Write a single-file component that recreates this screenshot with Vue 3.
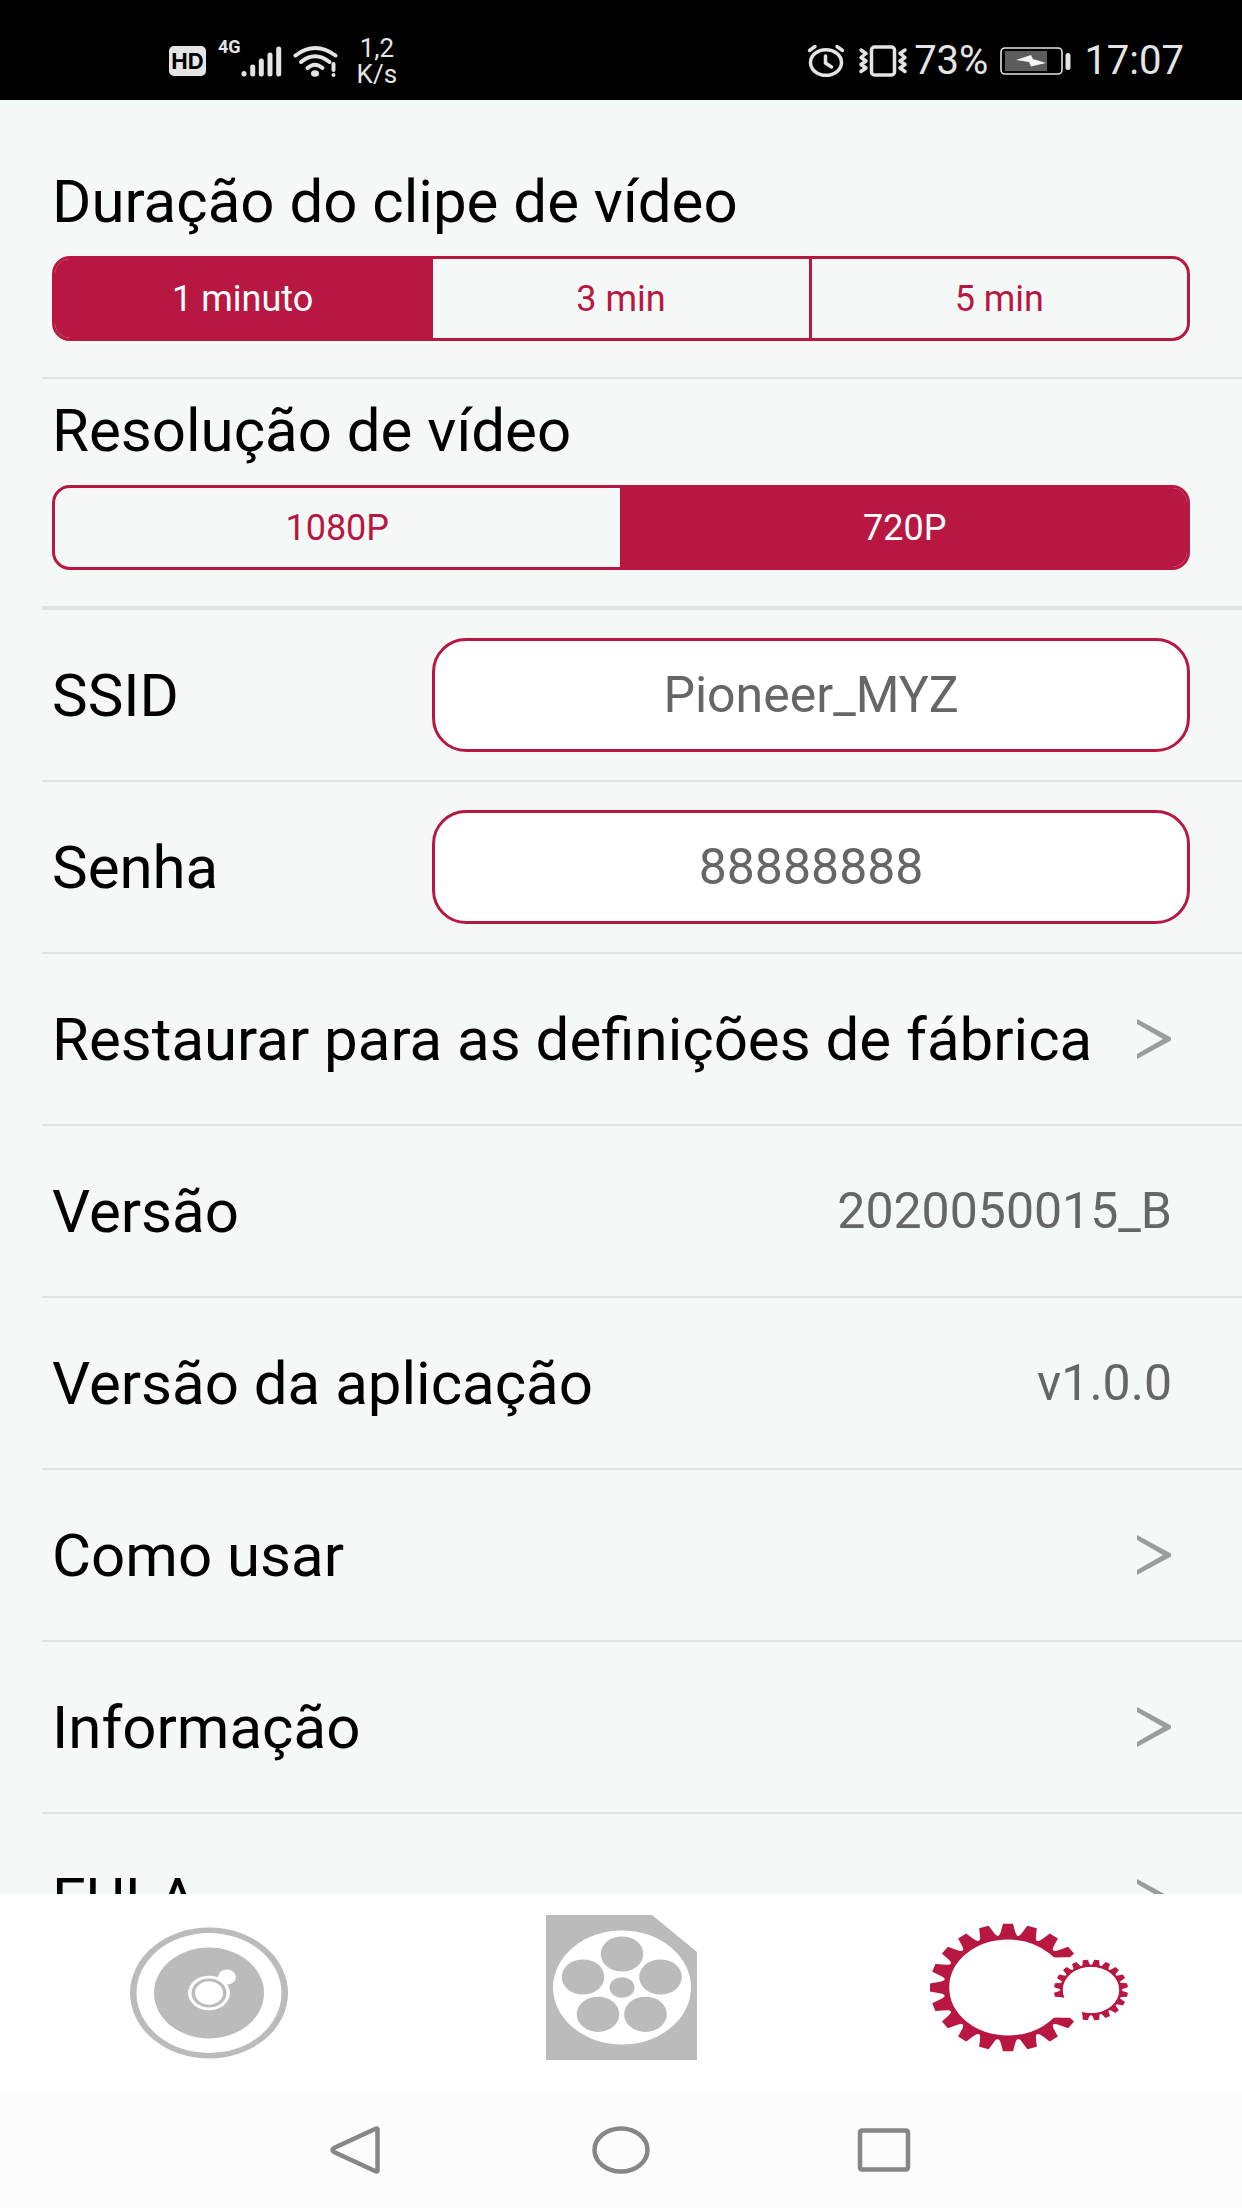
<script setup>
import { ref } from 'vue'

const durations = ['1 minuto', '3 min', '5 min']
const resolutions = ['1080P', '720P']
const duration = ref('1 minuto')
const resolution = ref('720P')
const ssid = ref('Pioneer_MYZ')
const password = ref('88888888')

const rows = [
  { label: 'Restaurar para as definições de fábrica', link: true },
  { label: 'Versão', value: '2020050015_B' },
  { label: 'Versão da aplicação', value: 'v1.0.0' },
  { label: 'Como usar', link: true },
  { label: 'Informação', link: true },
  { label: 'EULA', link: true }
]

const range = (from, to, step) => {
  const out = []
  for (let a = from; a <= to; a += step) out.push(a)
  return out
}
// Angles run clockwise from the right-hand side.
const bigTeeth = range(36, 324, 18)
const smallTeeth = [99].concat(range(171, 441, 18))
</script>

<template>
  <div class="screen">
    <header class="status">
      <div class="status-group">
        <span class="hd">HD</span>
        <span class="net">4G</span>
        <svg class="bars" width="42" height="34" viewBox="0 0 42 34" aria-hidden="true">
          <g stroke="#e4e4e4" stroke-width="5" stroke-linecap="round">
            <path d="M3 29.500V30M11.700 23V30M20.300 17V30M29 11V30M37.700 5V30" />
          </g>
        </svg>
        <svg class="wifi" width="46" height="34" viewBox="0 0 46 34" aria-hidden="true">
          <g fill="none" stroke="#e4e4e4" stroke-width="4" stroke-linecap="round">
            <path d="M2.500 11.500Q22 -3.500 42.500 11.500" />
            <path d="M8 18Q22 6.500 36.500 18" />
            <path d="M14.500 24Q22 17.500 29.500 24" />
            <path d="M40.500 20V26M40.500 31V31.100" />
          </g>
          <ellipse cx="22" cy="29.500" rx="4" ry="3.300" fill="#e4e4e4" />
        </svg>
        <span class="speed">1,2<br />K/s</span>
      </div>
      <div class="status-group">
        <svg width="38" height="34" viewBox="0 0 38 34" aria-hidden="true">
          <g fill="none" stroke="#e4e4e4" stroke-width="3.500" stroke-linecap="round">
            <ellipse cx="19" cy="18.500" rx="15.500" ry="12.800" />
            <path d="M18.500 12V19L24.500 23" />
            <path d="M2.500 6.500L8 2.500M35.500 6.500L30 2.500" />
          </g>
        </svg>
        <svg class="vibrate" width="50" height="34" viewBox="0 0 50 34" aria-hidden="true">
          <g fill="none" stroke="#e4e4e4" stroke-width="3.500" stroke-linecap="round" stroke-linejoin="round">
            <rect x="13.500" y="3" width="23" height="28" rx="3" />
            <path d="M3 6L8 9.500L3 13.500L8 17L3 20.500L8 24L3 27.500" />
            <path d="M47 6L42 9.500L47 13.500L42 17L47 20.500L42 24L47 27.500" />
          </g>
        </svg>
        <span class="clock">73%</span>
        <svg class="battery" width="72" height="30" viewBox="0 0 72 30" aria-hidden="true">
          <rect x="1" y="2" width="61" height="26" rx="4" fill="none" stroke="#e4e4e4" stroke-width="1.600" />
          <rect x="5" y="5" width="42" height="20" fill="#5c5c5c" />
          <path d="M16 14L31 9L33 13L46 17L31 20.500L29 16Z" fill="#f4f4f4" />
          <rect x="65.500" y="7" width="5" height="17" rx="2.500" fill="#e4e4e4" />
        </svg>
        <span class="clock">17:07</span>
      </div>
    </header>

    <main class="settings">
      <section class="block first">
        <h2>Duração do clipe de vídeo</h2>
        <div class="segments" role="group" aria-label="Duração do clipe de vídeo">
          <button
            v-for="d in durations"
            :key="d"
            type="button"
            :class="{ on: d === duration }"
            :aria-pressed="d === duration"
            @click="duration = d"
          >{{ d }}</button>
        </div>
      </section>
      <section class="block second">
        <h2>Resolução de vídeo</h2>
        <div class="segments" role="group" aria-label="Resolução de vídeo">
          <button
            v-for="r in resolutions"
            :key="r"
            type="button"
            :class="{ on: r === resolution }"
            :aria-pressed="r === resolution"
            @click="resolution = r"
          >{{ r }}</button>
        </div>
      </section>
      <div class="row field">
        <label for="ssid">SSID</label>
        <input id="ssid" v-model="ssid" type="text" />
      </div>
      <div class="row field">
        <label for="password">Senha</label>
        <input id="password" v-model="password" type="text" />
      </div>
      <component
        :is="row.link ? 'a' : 'div'"
        v-for="row in rows"
        :key="row.label"
        class="row"
        :href="row.link ? '#' : undefined"
      >
        <span>{{ row.label }}</span>
        <svg v-if="row.link" width="36" height="42" viewBox="0 0 36 42" aria-hidden="true">
          <path d="M1 1V6L27 21L1 36V41L35 22.500V19.500Z" fill="#9b9d9c" />
        </svg>
        <span v-else class="value">{{ row.value }}</span>
      </component>
    </main>

    <nav class="tabs">
      <button type="button" aria-label="Câmera">
        <svg width="240" height="160" viewBox="0 0 240 160" aria-hidden="true">
          <g fill="#bbb">
            <ellipse cx="122" cy="80" rx="79" ry="65.500" />
            <ellipse cx="122" cy="80" rx="72.500" ry="60" fill="#fff" />
            <ellipse cx="122" cy="80" rx="55" ry="45.500" />
            <ellipse cx="140" cy="64" rx="9" ry="7.500" fill="#fff" />
            <ellipse cx="122" cy="80" rx="21" ry="17.200" fill="#fff" />
            <ellipse cx="122" cy="80" rx="17.500" ry="14.500" />
            <ellipse cx="122" cy="80" rx="14" ry="11.800" fill="#fff" />
          </g>
        </svg>
      </button>
      <button type="button" aria-label="Vídeos">
        <svg width="240" height="160" viewBox="0 0 240 160" aria-hidden="true">
          <g fill="#bbb">
            <path d="M45 2H151L196 39V147H45Z" />
            <ellipse cx="121" cy="74.500" rx="69" ry="57" fill="#fff" />
            <ellipse cx="121" cy="74.500" rx="12.500" ry="10.300" />
            <ellipse cx="121" cy="41" rx="21.300" ry="17.600" />
            <ellipse cx="82" cy="64" rx="21.300" ry="17.600" />
            <ellipse cx="159.500" cy="64" rx="21.300" ry="17.600" />
            <ellipse cx="97" cy="101.300" rx="21.300" ry="17.600" />
            <ellipse cx="144.500" cy="101.300" rx="21.300" ry="17.600" />
          </g>
        </svg>
      </button>
      <button type="button" aria-label="Configurações" aria-current="page">
        <svg width="240" height="160" viewBox="0 0 240 160" aria-hidden="true">
          <defs>
            <clipPath id="big-gap"><path d="M-90 -90H90V-37H38V37H90V90H-90Z" /></clipPath>
            <clipPath id="small-gap"><path d="M-45 -45H45V45H-9V9H-45Z" /></clipPath>
          </defs>
          <g transform="translate(93 74.500) scale(1 .816)" fill="#b81742">
            <g clip-path="url(#big-gap)">
              <circle r="61.500" fill="none" stroke="#b81742" stroke-width="5.500" />
              <path
                v-for="a in bigTeeth"
                :key="a"
                d="M60 -11Q65 -8 67 -7.500L78 -5V5L67 7.500Q65 8 60 11Z"
                :transform="`rotate(${a})`"
              />
            </g>
          </g>
          <g transform="translate(176 77) scale(1 .82)" fill="#b81742">
            <g clip-path="url(#small-gap)">
              <circle r="29.500" fill="none" stroke="#b81742" stroke-width="2.500" />
              <path
                v-for="a in smallTeeth"
                :key="a"
                d="M28.500 -5L32 -3.500L37 -2.500V2.500L32 3.500L28.500 5Z"
                :transform="`rotate(${a})`"
              />
            </g>
          </g>
        </svg>
      </button>
    </nav>

    <nav class="system">
      <button type="button" aria-label="Voltar">
        <svg width="60" height="50" viewBox="0 0 60 50" aria-hidden="true">
          <path d="M50.500 4V46Q50 47 48 46L7 27Q4 25 7 23L48 4Q50 3 50.500 4Z" />
        </svg>
      </button>
      <button type="button" aria-label="Início">
        <svg width="60" height="50" viewBox="0 0 60 50" aria-hidden="true">
          <ellipse cx="30" cy="25" rx="26.500" ry="21.500" />
        </svg>
      </button>
      <button type="button" aria-label="Recentes">
        <svg width="60" height="50" viewBox="0 0 60 50" aria-hidden="true">
          <rect x="5" y="5.500" width="48" height="39" rx="2" />
        </svg>
      </button>
    </nav>
  </div>
</template>

<style>
body {
  margin: 0;
  background: #f4f8f7;
}
</style>

<style scoped>
.screen {
  display: flex;
  flex-direction: column;
  height: 100vh;
  overflow: hidden;
  background: #f4f8f7;
  color: #000;
  font-family: Roboto, sans-serif;
}
svg {
  display: block;
  flex: none;
}
button {
  margin: 0;
  padding: 0;
  border: 0;
  background: none;
  font: inherit;
}

.status {
  display: flex;
  flex: none;
  align-items: center;
  justify-content: space-between;
  box-sizing: border-box;
  height: 100px;
  padding: 22px 58px 0 169px;
  background: #000;
  color: #e4e4e4;
}
.status-group {
  display: flex;
  align-items: center;
}
.hd {
  width: 37px;
  border-radius: 5px;
  background: #e4e4e4;
  color: #000;
  font-family: Inter, sans-serif;
  font-size: 22px;
  font-weight: 700;
  line-height: 30px;
  text-align: center;
}
.net {
  align-self: flex-start;
  margin-left: 12px;
  font-size: 18px;
  font-weight: 700;
  line-height: 24px;
}
.wifi {
  margin-left: 10px;
}
.speed {
  margin-left: 18px;
  font-size: 26px;
  line-height: 26px;
  text-align: center;
}
.vibrate {
  margin: 0 6px 0 13px;
}
.battery {
  margin: 0 12px;
}
.clock {
  font-size: 40px;
  line-height: 40px;
}

.settings {
  flex: 1;
  min-height: 0;
  overflow: hidden;
  padding-left: 42px;
}
.block {
  padding: 0 52px 36px 10px;
  border-bottom: 2px solid #e2e4e3;
}
.first {
  padding-top: 68px;
}
.second {
  padding-top: 18px;
  border-bottom-width: 4px;
}
h2 {
  margin: 0 0 20px;
  font-size: 60px;
  font-weight: 400;
  line-height: 68px;
}
.segments {
  display: flex;
  box-sizing: border-box;
  height: 85px;
  overflow: hidden;
  border: 3px solid #b81742;
  border-radius: 18px;
}
.segments button {
  flex: 1;
  color: #b81742;
  font-size: 36px;
}
.segments button + button {
  border-left: 3px solid #b81742;
}
.segments .on {
  background: #b81742;
  color: #fff;
}

.row {
  display: flex;
  align-items: center;
  justify-content: space-between;
  box-sizing: border-box;
  height: 172px;
  padding: 0 70px 0 10px;
  border-bottom: 2px solid #e2e4e3;
  color: #000;
  font-size: 60px;
  text-decoration: none;
  white-space: nowrap;
}
.field {
  padding-right: 52px;
}
.field input {
  box-sizing: border-box;
  width: 66.6%;
  height: 114px;
  border: 3px solid #b81742;
  border-radius: 34px;
  background: #fff;
  color: #666;
  font: inherit;
  font-size: 50px;
  text-align: center;
}
.value {
  color: #666;
  font-size: 50px;
}

.tabs {
  display: flex;
  flex: none;
  height: 198px;
  background: #fff;
}
.tabs button {
  display: flex;
  flex: 1;
  align-items: center;
  justify-content: center;
}

.system {
  display: flex;
  flex: none;
  justify-content: center;
  height: 116px;
  background: #fcfcfc;
}
.system button {
  display: flex;
  align-items: center;
  justify-content: center;
  width: 264px;
}
.system svg {
  fill: none;
  stroke: #868686;
  stroke-width: 4.5;
}
</style>
